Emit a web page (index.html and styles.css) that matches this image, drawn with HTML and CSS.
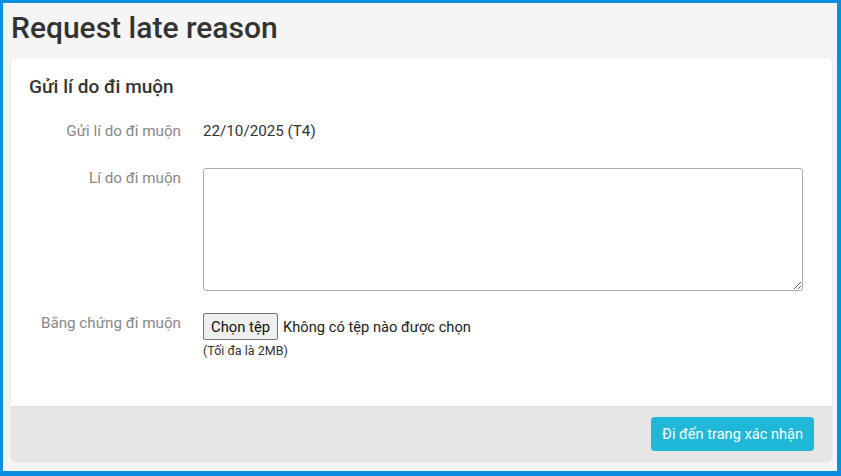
FILE: index.html
```html
<!DOCTYPE html>
<html lang="vi">
<head>
  <meta charset="UTF-8">
  <meta name="viewport" content="width=device-width, initial-scale=1.0">
  <title>Request late reason</title>
  <link rel="stylesheet" href="styles.css">
</head>
<body>
  <div class="frame">
    <h1 class="page-title">Request late reason</h1>
    <div class="card">
      <div class="card-body">
        <h2 class="card-title">Gửi lí do đi muộn</h2>
        <div class="form-row row-date">
          <label class="form-label">Gửi lí do đi muộn</label>
          <div class="form-value">22/10/2025 (T4)</div>
        </div>
        <div class="form-row row-reason">
          <label class="form-label" for="reason">Lí do đi muộn</label>
          <div class="form-field">
            <textarea id="reason" class="reason-box"></textarea>
          </div>
        </div>
        <div class="form-row row-proof">
          <label class="form-label">Bằng chứng đi muộn</label>
          <div class="form-field">
            <div class="file-input">
              <button class="file-button" type="button">Chọn tệp</button>
              <span class="file-name">Không có tệp nào được chọn</span>
            </div>
            <div class="file-hint">(Tối đa là 2MB)</div>
          </div>
        </div>
      </div>
      <div class="card-footer">
        <button class="submit-button" type="button">Đi đến trang xác nhận</button>
      </div>
    </div>
  </div>
</body>
</html>
```

FILE: styles.css
```css
html, body {
  margin: 0;
  padding: 0;
}

body {
  font-family: Roboto, "Noto Sans", Arial, sans-serif;
  color: #333;
  background-color: #0a8ee2;
}

.frame {
  box-sizing: border-box;
  height: 476px;
  border-style: solid;
  border-color: #0a8ee2;
  border-width: 3px 4px 5px 3px;
  background-color: #f5f5f5;
  padding: 0 5px 9px 8px;
  display: flex;
  flex-direction: column;
}

.page-title {
  margin: 0;
  padding-top: 8px;
  height: 47px;
  font-size: 30px;
  font-weight: 500;
  line-height: 34px;
  color: #333;
}

.card {
  flex: 1;
  background-color: #fff;
  border-radius: 5px;
  box-shadow: 0 0 3px rgba(0, 0, 0, 0.08);
  display: flex;
  flex-direction: column;
  overflow: hidden;
}

.card-body {
  flex: 1;
  padding: 18px 29px 0 18px;
}

.card-title {
  margin: 0;
  font-size: 19px;
  font-weight: 500;
  line-height: 22px;
  color: #333;
}

.form-row {
  display: flex;
  align-items: flex-start;
}

.row-date {
  margin-top: 22px;
}

.row-reason {
  margin-top: 25px;
}

.row-proof {
  margin-top: 21px;
}

.form-label {
  width: 152px;
  flex-shrink: 0;
  text-align: right;
  font-size: 15.2px;
  line-height: 22px;
  color: #888;
}

.form-value {
  margin-left: 22px;
  font-size: 15.2px;
  line-height: 22px;
  color: #333;
}

.form-field {
  margin-left: 22px;
  flex: 1;
}

.reason-box {
  display: block;
  box-sizing: border-box;
  width: 600px;
  height: 123px;
  margin-top: 1px;
  border: 1px solid #aaa;
  border-radius: 3px;
  font-family: inherit;
  font-size: 14px;
  resize: vertical;
}

.file-input {
  display: flex;
  align-items: center;
  margin-top: 1px;
}

.file-button {
  box-sizing: border-box;
  height: 27px;
  padding: 0 7px;
  font-family: inherit;
  font-size: 14.8px;
  color: #111;
  background-color: #efefef;
  border: 1px solid #767676;
  border-radius: 2px;
}

.file-name {
  margin-left: 5px;
  font-size: 14.7px;
  color: #222;
}

.file-hint {
  margin-top: 3px;
  font-size: 12.5px;
  line-height: 16px;
  color: #333;
}

.card-footer {
  height: 56px;
  background-color: #e5e5e5;
  display: flex;
  justify-content: flex-end;
  align-items: center;
  padding-right: 18px;
}

.submit-button {
  height: 34px;
  padding: 0 11px;
  border: none;
  border-radius: 4px;
  background-color: #1fb8d9;
  color: #fff;
  font-family: inherit;
  font-size: 14.6px;
  cursor: pointer;
}
```
